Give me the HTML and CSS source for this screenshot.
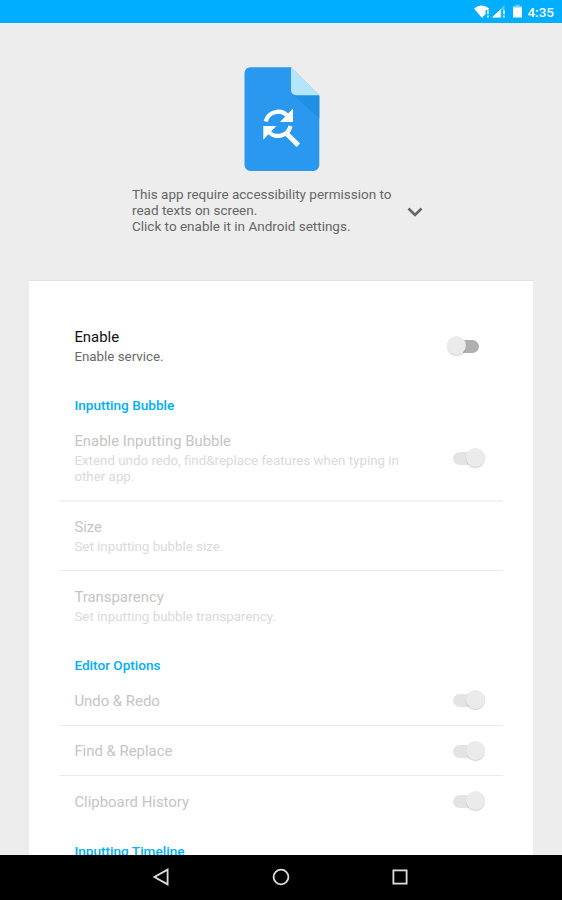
FILE: index.html
```html
<!DOCTYPE html>
<html lang="en">
<head>
<meta charset="utf-8">
<title>Settings</title>
<link rel="stylesheet" href="styles.css">
</head>
<body>
<div class="statusbar">
  <svg class="status-icons" width="50" height="23" viewBox="0 0 50 23">
    <path d="M1 8.400Q8.600 2.600 16.200 8.400L15 10H12.600V14L9 18Z" fill="#fff"/>
    <path d="M14.200 10.200h1.500v4h-1.500zM14.200 15.600h1.500v1.900h-1.500z" fill="#fff"/>
    <path d="M31.500 5V10h-3v7.500H19Z" fill="#fff" opacity=".35"/>
    <path d="M27.600 9.200V17.500H19Z" fill="#fff"/>
    <path d="M30.200 10.200h1.500v4h-1.500zM30.200 15.600h1.500v1.900h-1.500z" fill="#fff"/>
    <path d="M42.600 4.800h4v1.300h2.400V8H40V6.100h2.600Z" fill="#fff" opacity=".45"/>
    <path d="M40 7.500h9V17.500h-9z" fill="#fff"/>
  </svg>
  <span class="clock">4:35</span>
</div>
<main class="screen">
  <header class="intro">
    <svg class="logo" width="76" height="105" viewBox="0 0 76 105">
      <path d="M6 .2H47L75.300 28.500V98a6 6 0 0 1-6 6H6.500a6 6 0 0 1-6-6V6.200a6 6 0 0 1 5.500-6Z" fill="#2b98f0"/>
      <path d="M49 27.500 75.300 51.500V28.500Z" fill="#1e8fe3"/>
      <path d="M47 .2 75.300 28.300H52a5 5 0 0 1-5-5Z" fill="#b3e5fc"/>
      <g fill="none" stroke="#fff" stroke-width="4.200">
        <path d="M21.700 54.600A12.700 12.700 0 0 1 43.500 49"/>
        <path d="M24.500 64.500A12.700 12.700 0 0 0 46.500 59"/>
        <path d="M43.500 67.500 54.300 78.300" stroke-width="4.800"/>
      </g>
      <path d="M49 41.500V55H36ZM19.300 59H32.300L19.300 72.700Z" fill="#fff"/>
    </svg>
    <div class="notice">
      <p class="notice-text">This app require accessibility permission to<br>read texts on screen.<br>Click to enable it in Android settings.</p>
      <svg class="chevron" width="16" height="10" viewBox="0 0 16 10"><path d="M1.500 1.500 8 8l6.500-6.500" fill="none" stroke="#666" stroke-width="2.600"/></svg>
    </div>
  </header>
  <section class="card">
    <div class="row row-enable">
      <div class="label"><div class="title">Enable</div><div class="sub">Enable service.</div></div>
      <span class="switch off"></span>
    </div>
    <h2 class="heading">Inputting Bubble</h2>
    <div class="row disabled row-first">
      <div class="label"><div class="title">Enable Inputting Bubble</div><div class="sub">Extend undo redo, find&amp;replace features when typing in<br>other app.</div></div>
      <span class="switch"></span>
    </div>
    <div class="row disabled ruled row-text row-size">
      <div class="label"><div class="title">Size</div><div class="sub">Set inputting bubble size.</div></div>
    </div>
    <div class="row disabled ruled row-text">
      <div class="label"><div class="title">Transparency</div><div class="sub">Set inputting bubble transparency.</div></div>
    </div>
    <h2 class="heading heading-editor">Editor Options</h2>
    <div class="row disabled row-single row-undo"><div class="title">Undo &amp; Redo</div><span class="switch"></span></div>
    <div class="row disabled ruled row-single"><div class="title">Find &amp; Replace</div><span class="switch"></span></div>
    <div class="row disabled ruled row-single row-clipboard"><div class="title">Clipboard History</div><span class="switch"></span></div>
    <h2 class="heading heading-timeline">Inputting Timeline</h2>
  </section>
</main>
<nav class="navbar">
  <svg width="18" height="18" viewBox="0 0 18 18"><path d="M15.600 1.600V16.400L2.400 9Z"/></svg>
  <svg width="18" height="18" viewBox="0 0 18 18"><circle cx="9" cy="9" r="7.400"/></svg>
  <svg width="18" height="18" viewBox="0 0 18 18"><rect x="2.400" y="2.400" width="13.200" height="13.200"/></svg>
</nav>
</body>
</html>
```
FILE: styles.css
```css
* { box-sizing: border-box; }
body {
  margin: 0;
  width: 562px;
  height: 900px;
  overflow: hidden;
  display: flex;
  flex-direction: column;
  background: #ededed;
  font-family: Roboto, "Liberation Sans", sans-serif;
}
.statusbar {
  height: 23px;
  flex: none;
  background: #00aeff;
  display: flex;
  align-items: center;
  justify-content: flex-end;
  padding-right: 8px;
  color: #fff;
}
.status-icons { margin-right: 4.500px; }
.clock { font-size: 13.5px; font-weight: 500; line-height: 23px; padding-top: 2px; }
.screen { height: 832px; flex: none; overflow: hidden; }
.intro { height: 257px; padding-top: 44px; }
.logo { display: block; margin-left: 244px; }
.notice {
  display: flex;
  align-items: center;
  gap: 16px;
  margin: 14px 0 0 132px;
}
.chevron { margin-top: 3px; }
.notice-text {
  margin: 0;
  width: 259px;
  font-size: 13.5px;
  line-height: 16px;
  color: #666;
  white-space: nowrap;
}
.card {
  width: 504px;
  height: 640px;
  margin-left: 29px;
  padding: 0 30px;
  background: #fff;
  border-top: 1px solid #e2e2e2;
}
.row {
  display: flex;
  align-items: center;
  justify-content: space-between;
  padding: 0 18px 0 15.4px;
}
.label, .title { white-space: nowrap; }
.title { font-size: 14.9px; line-height: 20px; color: #111; }
.sub { font-size: 13.35px; line-height: 16px; color: #696969; padding-top: 2px; }
.disabled .title { color: #c5c5c5; }
.disabled .sub { color: #dadada; }
.row-enable { height: 38px; margin-top: 46px; }
.row-first { height: 77px; align-items: flex-start; padding-top: 8px; }
.row-first .switch { margin-top: 17px; }
.row-text { height: 70px; }
.row-single { height: 50px; }
.row-single .title { padding-top: 1px; }
.row-undo { height: 50px; }
.row-clipboard { height: 51px; }
.ruled { border-top: 1px solid #ebebeb; }
.row-size { border-top: 2px solid #f3f3f3; padding-bottom: 1px; }
.heading {
  margin: 32px 0 10px 15.4px;
  font-size: 13.6px;
  font-weight: 500;
  line-height: 16px;
  color: #00aeff;
}
.heading-editor { margin: 17px 0 2px 15.400px; }
.heading-timeline { margin-top: 17px; }
.switch {
  position: relative;
  width: 32px;
  height: 20px;
  flex: none;
}
.switch::before {
  content: "";
  position: absolute;
  left: 0;
  top: 4px;
  width: 26px;
  height: 13px;
  border-radius: 7px;
  background: #e4e4e4;
}
.switch::after {
  content: "";
  position: absolute;
  right: 0;
  top: 0;
  width: 19px;
  height: 19px;
  border-radius: 50%;
  background: #ebebeb;
  box-shadow: 0 1px 1px rgba(0, 0, 0, .18);
}
.off::before { background: #b0b0b0; }
.off::after { right: auto; left: -6px; }
.navbar {
  height: 45px;
  flex: none;
  background: #000;
  display: flex;
  align-items: center;
  justify-content: center;
  gap: 101.500px;
  padding: 0 1px 1px 0;
}
.navbar svg { fill: none; stroke: #ddd; stroke-width: 1.800; }
```
